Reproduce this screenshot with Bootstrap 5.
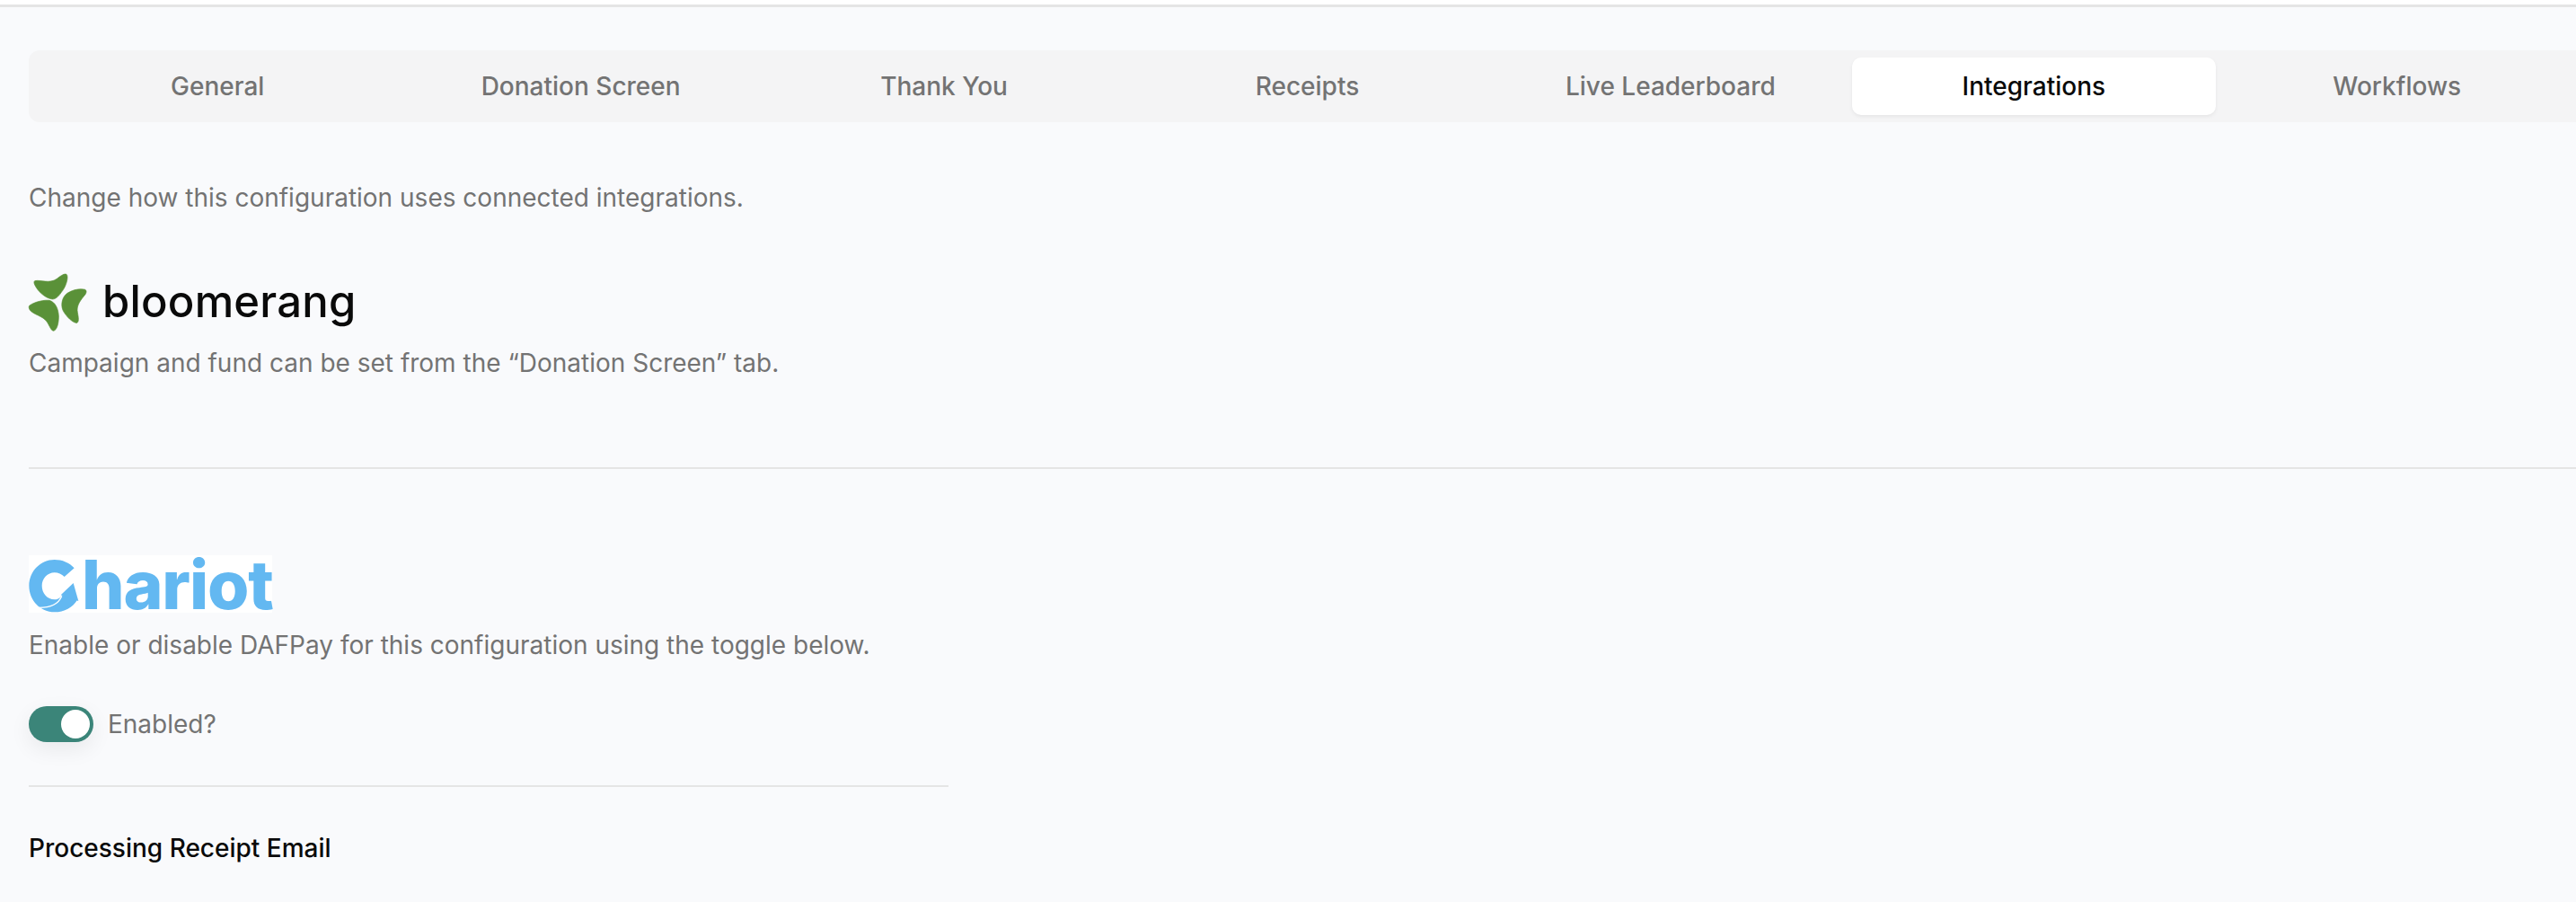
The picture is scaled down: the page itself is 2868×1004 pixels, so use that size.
<!DOCTYPE html>
<html lang="en">
<head>
  <meta charset="UTF-8" />
  <title>Integrations</title>
  <link href="https://cdn.jsdelivr.net/npm/bootstrap@5.3.3/dist/css/bootstrap.min.css" rel="stylesheet">
  <style>
    body{background:#f9fafc;font-family:Inter,"Liberation Sans",sans-serif;font-size:28px;line-height:40px;color:#737373;overflow:hidden;height:1004px;}
    .top-strip{height:8px;background:#fff;border-bottom:3px solid #e5e5e5;}
    .page-body{width:2879px;padding:48px 0 0 32px;}

    /* tabs */
    .tab-bar{background:#f4f4f5;border-radius:12px;padding:8px;}
    .tab-bar .nav-link{height:64px;padding:12px 0;color:#737373;font-weight:500;border-radius:10px;line-height:40px;}
    .tab-bar .nav-link.active{background:#fff;color:#0a0a0a;box-shadow:0 2px 4px rgba(0,0,0,.06);}

    .intro-text{margin:64px 0 0;}
    .logo-bloom{margin-top:62px;height:68px;}
    .bloom-mark{margin-left:-2px;}
    .bloom-mark path{fill:#5a9138;stroke:#5a9138;stroke-width:2;stroke-linejoin:round;}
    .bloom-word{font-size:49px;line-height:68px;font-weight:500;color:#0a0a0a;letter-spacing:.2px;margin-left:16px;}
    .bloom-note{margin:14px 0 0;}
    .rule-full{margin:96px 0 0;border:0;border-top:2px solid #e5e5e5;opacity:1;}
    .logo-chariot{margin-top:96px;width:271px;height:64px;background:#fff;}
    .chariot-word{font-size:75px;line-height:64px;font-weight:800;color:#63b8f1;letter-spacing:-1.2px;margin:2px 0 0 -1px;}
    .chariot-note{margin:16px 0 0;}

    /* toggle */
    .enable-row{margin:48px 0 0;padding:0;min-height:40px;gap:16px;}
    .enable-row .form-check-input{width:72px;height:40px;margin:0;float:none;border:0;background-color:#3b8579;border-radius:20px;box-shadow:0 8px 24px rgba(0,0,0,.07);
      background-image:url("data:image/svg+xml,%3csvg xmlns='http://www.w3.org/2000/svg' viewBox='-4 -4 8 8'%3e%3ccircle r='3.2' fill='%23fff'/%3e%3c/svg%3e");}
    .enable-row .form-check-label{line-height:40px;}
    .rule-short{width:1024px;margin:48px 0 0;border:0;border-top:2px solid #e5e5e5;opacity:1;}
    .section-label{margin:48px 0 0;font-size:28px;line-height:40px;font-weight:500;color:#0a0a0a;}
  </style>
</head>
<body>
  <div class="top-strip"></div>

  <main class="page-body">
    <ul class="nav nav-pills nav-justified tab-bar">
      <li class="nav-item"><a class="nav-link" href="#">General</a></li>
      <li class="nav-item"><a class="nav-link" href="#">Donation Screen</a></li>
      <li class="nav-item"><a class="nav-link" href="#">Thank You</a></li>
      <li class="nav-item"><a class="nav-link" href="#">Receipts</a></li>
      <li class="nav-item"><a class="nav-link" href="#">Live Leaderboard</a></li>
      <li class="nav-item"><a class="nav-link active" href="#">Integrations</a></li>
      <li class="nav-item"><a class="nav-link" href="#">Workflows</a></li>
    </ul>

    <p class="intro-text">Change how this configuration uses connected integrations.</p>

    <!-- bloomerang -->
    <div class="logo-bloom d-flex align-items-center">
      <svg class="bloom-mark" width="68" height="68" viewBox="90 65 204 204">
        <path d="M116 97C135 92 165 108 190 90C205 78 215 72 222 75C230 82 222 115 205 135C195 150 185 158 175 158C150 155 125 130 116 110C113 103 113 99 116 97Z"/>
        <path d="M284 126C289 128 290 135 285 142C270 160 258 175 258 195C260 212 266 230 258 237C245 240 220 215 210 195C202 175 208 150 225 138C245 125 270 122 284 126Z"/>
        <path d="M100 178C120 165 150 160 165 162C185 168 195 190 196 215C196 240 190 262 178 264C168 262 165 240 150 226C135 212 100 205 97 188C96 183 97 180 100 178Z"/>
      </svg>
      <span class="bloom-word">bloomerang</span>
    </div>
    <p class="bloom-note">Campaign and fund can be set from the “Donation Screen” tab.</p>

    <hr class="rule-full">

    <!-- chariot -->
    <div class="logo-chariot d-flex align-items-center">
      <svg width="60" height="64" viewBox="96 85 180 192" class="flex-shrink-0">
        <path fill="#63b8f1" d="M248 128C232 110 208 100 182 100C135 100 97 139 97 187C97 236 135 275 182 275C215 275 243 259 258 234L240 200L205 222C198 230 190 233 182 233C158 233 140 212 140 187C140 163 159 143 182 143C194 143 206 148 215 157Z"/>
        <path fill="#63b8f1" d="M245 178L262 238L203 218Z"/>
        <path fill="none" stroke="#fff" stroke-width="4" d="M130 260C165 260 195 248 206 222"/>
      </svg>
      <span class="chariot-word">hariot</span>
    </div>
    <p class="chariot-note">Enable or disable DAFPay for this configuration using the toggle below.</p>

    <div class="form-check form-switch enable-row d-flex align-items-center">
      <input class="form-check-input" type="checkbox" id="dafpayEnabled" checked>
      <label class="form-check-label" for="dafpayEnabled">Enabled?</label>
    </div>

    <hr class="rule-short">

    <h2 class="section-label">Processing Receipt Email</h2>
  </main>

  <script src="https://cdn.jsdelivr.net/npm/bootstrap@5.3.3/dist/js/bootstrap.bundle.min.js"></script>
</body>
</html>
